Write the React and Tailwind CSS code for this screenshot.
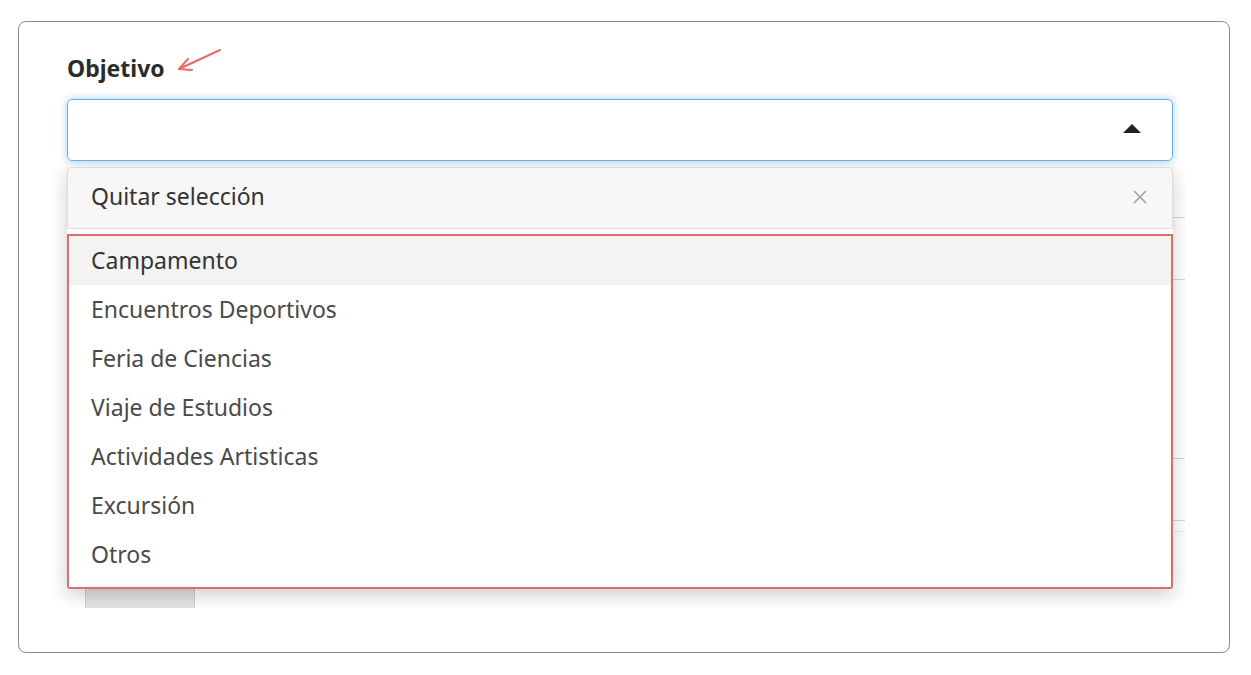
import React from 'react';

const options = [
    'Campamento',
    'Encuentros Deportivos',
    'Feria de Ciencias',
    'Viaje de Estudios',
    'Actividades Artisticas',
    'Excursión',
    'Otros',
];

const Arrow = () => (
    <svg width="48" height="26" viewBox="0 0 48 26" className="ml-[9px] mt-[-14px]">
        <path d="M46 2 L5 21" stroke="#e26d6d" strokeWidth="2" strokeLinecap="round" fill="none" />
        <path d="M5 21 L14 11 M5 21 L18 22" stroke="#e26d6d" strokeWidth="2" strokeLinecap="round" fill="none" />
    </svg>
);

const App = () => {
    return (
        <div className="w-[1251px] h-[675px] bg-white pt-[21px] pl-[18px]" style={{ fontFamily: '"Noto Sans", "Open Sans", sans-serif' }}>
            <div className="w-[1212px] h-[632px] border border-[#8a8a8a] rounded-[8px] pl-[48px] pt-[31px]">
                {/* label */}
                <div className="flex items-center h-[30px]">
                    <span className="text-[23px] font-bold text-[#2b2b2b]">Objetivo</span>
                    <Arrow />
                </div>

                {/* select */}
                <div className="mt-[16px] w-[1106px] h-[62px] border border-[#66afe9] rounded-[5px] shadow-[0_0_8px_rgba(102,175,233,0.6)] flex items-center justify-end pr-[31px]">
                    <svg width="18" height="9" viewBox="0 0 18 9" className="mb-[4px]">
                        <path d="M0 9 L9 0 L18 9 Z" fill="#222" />
                    </svg>
                </div>

                {/* area under select, dropdown open */}
                <div className="relative ml-[-17px] w-[1135px] h-[447px] overflow-hidden">
                    {/* content behind the menu */}
                    <div className="pl-[35px]">
                        <div className="h-[57px] border-b border-[#d4d4d8]"></div>
                        <div className="h-[62px] border-b border-[#d4d4d8]"></div>
                        <div className="h-[179px] border-b border-[#d4d4d8]"></div>
                        <div className="h-[62px] border-b border-[#d4d4d8]"></div>
                        <div className="h-[11px] border-b border-[#ececec]"></div>
                        <div className="mt-[48px] w-[110px] h-[44px] border border-[#cfcfcf] bg-[#e4e4e4] rounded-[3px]"></div>
                    </div>

                    {/* menu */}
                    <div className="absolute left-[17px] top-[6px] w-[1106px] bg-white rounded-[4px] shadow-[0_6px_20px_rgba(0,0,0,0.2)]">
                        <div className="h-[62px] bg-[#f7f7f7] border border-[#dedede] rounded-t-[4px] flex items-center justify-between pl-[23px] pr-[25px] pb-[3px]">
                            <span className="text-[23px] text-[#333]">Quitar selección</span>
                            <svg width="14" height="14" viewBox="0 0 14 14">
                                <path d="M1 1 L13 13 M13 1 L1 13" stroke="#a0a0a0" strokeWidth="1.6" />
                            </svg>
                        </div>
                        <div className="h-[5px] bg-white"></div>
                        <div className="border-2 border-[#e06c6c] rounded-b-[3px] pb-[8px]">
                            {options.map((opt, i) => (
                                <div
                                    key={opt}
                                    className={
                                        i === 0
                                            ? 'h-[49px] flex items-center pl-[22px] bg-[#f3f3f3] text-[23px] text-[#333]'
                                            : 'h-[49px] flex items-center pl-[22px] text-[23px] text-[#4a4a4a]'
                                    }
                                >
                                    {opt}
                                </div>
                            ))}
                        </div>
                    </div>
                </div>
            </div>
        </div>
    );
};

export default App;
